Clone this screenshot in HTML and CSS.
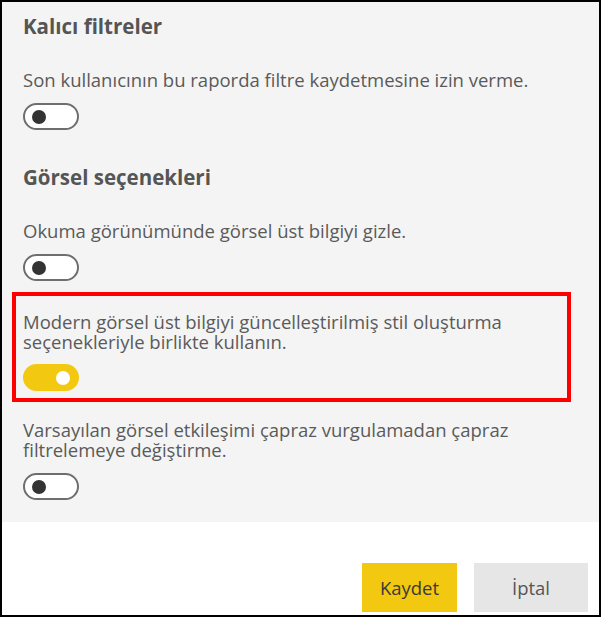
FILE: index.html
```html
<!DOCTYPE html>
<html lang="tr">
<head>
<meta charset="utf-8">
<link rel="stylesheet" href="styles.css">
</head>
<body>
<div class="frame">
  <div class="panel">
    <h2 class="heading first">Kalıcı filtreler</h2>
    <p class="label">Son kullanıcının bu raporda filtre kaydetmesine izin verme.</p>
    <div class="toggle"><span class="thumb"></span></div>

    <h2 class="heading">Görsel seçenekleri</h2>
    <p class="label">Okuma görünümünde görsel üst bilgiyi gizle.</p>
    <div class="toggle"><span class="thumb"></span></div>

    <div class="highlight">
      <p class="label">Modern görsel üst bilgiyi güncelleştirilmiş stil oluşturma<br>seçenekleriyle birlikte kullanın.</p>
      <div class="toggle on"><span class="thumb"></span></div>
    </div>

    <p class="label after">Varsayılan görsel etkileşimi çapraz vurgulamadan çapraz<br>filtrelemeye değiştirme.</p>
    <div class="toggle"><span class="thumb"></span></div>
  </div>
  <div class="footer">
    <button class="btn primary">Kaydet</button>
    <button class="btn secondary">İptal</button>
  </div>
</div>
</body>
</html>
```
FILE: styles.css
```css
html, body {
  margin: 0;
  padding: 0;
  background: #ffffff;
}
.frame {
  width: 601px;
  height: 617px;
  box-sizing: border-box;
  border: 2px solid #000;
  display: flex;
  flex-direction: column;
  font-family: "Open Sans", "Noto Sans", sans-serif;
  color: #5a5a5a;
}
.panel {
  background: #f4f4f4;
  height: 520px;
  box-sizing: border-box;
  padding: 10px 21px 0 21px;
  display: flex;
  flex-direction: column;
  align-items: flex-start;
}
.heading {
  margin: 33px 0 0 0;
  font-size: 20.5px;
  line-height: 28px;
  font-weight: 700;
  color: #555;
}
.heading.first {
  margin-top: 0;
}
.label {
  margin: 30px 0 0 0;
  font-size: 18.5px;
  line-height: 20px;
  color: #5a5a5a;
  white-space: nowrap;
}
.label.after {
  margin-top: 18px;
}
.toggle {
  margin-top: 13px;
  width: 56px;
  height: 27px;
  box-sizing: border-box;
  border: 2px solid #6e6e6e;
  border-radius: 14px;
  background: #fff;
  position: relative;
  flex: none;
}
.thumb {
  position: absolute;
  left: 7px;
  top: 4.5px;
  width: 14px;
  height: 14px;
  border-radius: 50%;
  background: #333;
}
.toggle.on {
  background: #f2c811;
  border-color: #f2c811;
}
.toggle.on .thumb {
  left: auto;
  right: 7px;
  background: #fff;
}
.highlight {
  margin: 11px 0 0 -11px;
  width: 559px;
  box-sizing: border-box;
  border: 4px solid #ff0000;
  padding: 16px 7px 7px 7px;
}
.highlight .label {
  margin-top: 0;
}
.highlight .toggle {
  margin-top: 12px;
}
.footer {
  flex: 1;
  display: flex;
  justify-content: flex-end;
  align-items: flex-end;
  gap: 17px;
  padding: 0 11px 3px 0;
}
.btn {
  height: 49px;
  border: none;
  font-family: "Open Sans", "Noto Sans", sans-serif;
  font-size: 18.5px;
  padding: 0;
  cursor: pointer;
}
.primary {
  width: 95px;
  background: #f2c811;
  color: #3b3a39;
}
.secondary {
  width: 114px;
  background: #e6e6e6;
  color: #555;
}
```
